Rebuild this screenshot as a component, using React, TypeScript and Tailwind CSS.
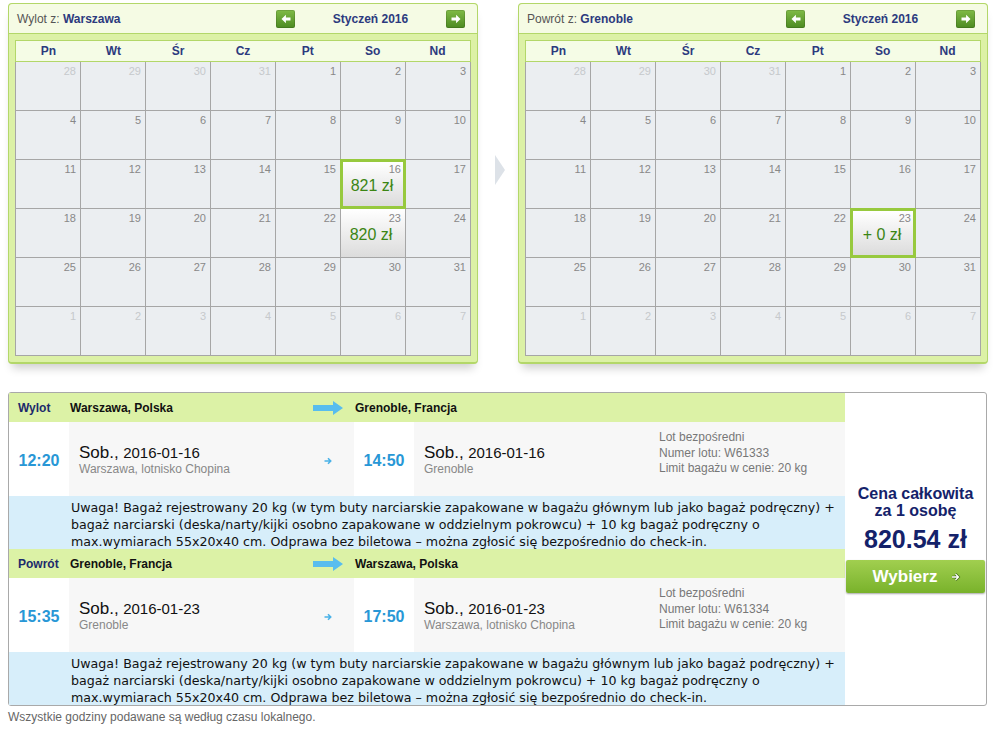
import React from 'react';

type Cell = { d: number; out?: boolean; price?: string; sel?: boolean };
type Prices = Record<number, { price: string; sel?: boolean }>;

const WEEK = ['Pn', 'Wt', 'Śr', 'Cz', 'Pt', 'So', 'Nd'];

// styczeń 2016 zaczyna się w piątek, siatka od 28 grudnia
function monthCells(prices: Prices): Cell[] {
    const cells: Cell[] = [];
    for (let i = 0; i < 42; i++) {
        if (i < 4) cells.push({ d: 28 + i, out: true });
        else if (i - 3 <= 31) cells.push({ d: i - 3, ...prices[i - 3] });
        else cells.push({ d: i - 34, out: true });
    }
    return cells;
}

function NavButton({ next }: { next?: boolean }) {
    return (
        <button className="flex h-[18px] w-[19px] items-center justify-center rounded-[2px] bg-gradient-to-b from-[#80bb46] to-[#4c8a20] shadow-[inset_0_0_0_1px_rgba(0,0,0,0.12)]">
            <svg width="10" height="10" viewBox="0 0 10 10" className={next ? '' : 'rotate-180'}>
                <path d="M0.5 3.6h4.6V0.8L9.5 5 5.1 9.2V6.4H0.5z" fill="#fff" />
            </svg>
        </button>
    );
}

function DayCell({ c }: { c: Cell }) {
    if (c.price) {
        return (
            <div
                className={
                    c.sel
                        ? 'relative z-10 -m-px flex h-[50px] flex-col border-[3px] border-[#97c93e] bg-gradient-to-b from-white to-[#dcdcdc] pt-px pr-[2px]'
                        : 'flex h-[48px] flex-col bg-gradient-to-b from-white to-[#dcdcdc] pt-[3px] pr-[4px]'
                }
            >
                <div className="text-right text-[11px] leading-[12px] text-[#888]">{c.d}</div>
                <div className="mt-[2px] text-center text-[16px] leading-[18px] text-[#3b8514]">{c.price}</div>
            </div>
        );
    }
    return (
        <div className="h-[48px] bg-[#ebeef1] pt-[3px] pr-[4px]">
            <div className={c.out ? 'text-right text-[11px] leading-[12px] text-[#c6c9cc]' : 'text-right text-[11px] leading-[12px] text-[#888]'}>
                {c.d}
            </div>
        </div>
    );
}

function Calendar({ label, city, prices }: { label: string; city: string; prices: Prices }) {
    const cells = monthCells(prices);
    return (
        <div className="w-[470px] rounded-[4px] border border-b-2 border-[#b3d769] bg-[#dcf1a6] shadow-[0_8px_9px_-4px_rgba(0,0,0,0.2)]">
            <div className="flex h-[30px] items-center justify-between rounded-t-[4px] border-b border-[#b3d769] bg-[#f5fbe4] pl-[8px] pr-[12px]">
                <div className="text-[12px] text-[#555]">
                    {label} <span className="font-bold text-[#2c3a7e]">{city}</span>
                </div>
                <div className="flex items-center">
                    <NavButton />
                    <div className="w-[151px] text-center text-[12px] font-bold text-[#2c3a7e]">Styczeń 2016</div>
                    <NavButton next />
                </div>
            </div>
            <div className="p-[6px]">
                <div className="flex h-[22px] border border-[#b3d769] bg-[#f5fce6]">
                    {WEEK.map((w) => (
                        <div key={w} className="flex-1 text-center text-[12px] font-bold leading-[20px] text-[#2c3a7e]">
                            {w}
                        </div>
                    ))}
                </div>
                <div className="grid grid-cols-7 gap-px border-x border-b border-[#a6a6a6] bg-[#a6a6a6]">
                    {cells.map((c, i) => (
                        <DayCell key={i} c={c} />
                    ))}
                </div>
            </div>
        </div>
    );
}

function BigArrow() {
    return (
        <svg width="30" height="14" viewBox="0 0 30 14">
            <path d="M0 4h20V0l10 7-10 7v-4H0z" fill="#58bdee" />
        </svg>
    );
}

function SmallArrow() {
    return (
        <svg width="8" height="8" viewBox="0 0 8 8">
            <path d="M0.5 4h6M4 1.3 6.7 4 4 6.7" stroke="#4ab2e8" strokeWidth="1.6" fill="none" />
        </svg>
    );
}

interface LegProps {
    kind: string;
    from: string;
    to: string;
    dep: string;
    arr: string;
    date: string;
    depPlace: string;
    arrPlace: string;
    flight: string;
}

function Leg({ kind, from, to, dep, arr, date, depPlace, arrPlace, flight }: LegProps) {
    return (
        <>
            <div className="flex h-[29px] items-center bg-[#dcf2a6] text-[12px] font-bold">
                <div className="w-[60px] pl-[9px] text-[#1d2a6b]">{kind}</div>
                <div className="flex w-[285px] items-center justify-between pl-px pr-[11px] text-[#111]">
                    {from}
                    <BigArrow />
                </div>
                <div className="pl-px text-[#111]">{to}</div>
            </div>
            <div className="flex h-[74px]">
                <div className="flex w-[60px] items-center justify-center bg-white pt-[3px] text-[16px] font-bold text-[#2897d6]">{dep}</div>
                <div className="flex w-[285px] items-center justify-between bg-[#f7f7f7] pl-[10px] pr-[22px] pt-[3px]">
                    <div>
                        <div className="leading-[18px] text-[#111]">
                            <span className="text-[17px]">Sob.,</span> <span className="text-[15px]">{date}</span>
                        </div>
                        <div className="text-[12px] leading-[15px] text-[#888]">{depPlace}</div>
                    </div>
                    <SmallArrow />
                </div>
                <div className="flex w-[60px] items-center justify-center bg-white pt-[3px] text-[16px] font-bold text-[#2897d6]">{arr}</div>
                <div className="flex flex-1 bg-[#f7f7f7] pl-[10px]">
                    <div className="w-[235px] self-center pt-[3px]">
                        <div className="leading-[18px] text-[#111]">
                            <span className="text-[17px]">Sob.,</span> <span className="text-[15px]">{date}</span>
                        </div>
                        <div className="text-[12px] leading-[15px] text-[#888]">{arrPlace}</div>
                    </div>
                    <div className="pt-[8px] text-[12px] leading-[15.5px] text-[#777]">
                        Lot bezpośredni
                        <br />
                        Numer lotu: {flight}
                        <br />
                        Limit bagażu w cenie: 20 kg
                    </div>
                </div>
            </div>
            <div className="h-[53px] whitespace-nowrap bg-[#d7eefa] pl-[62px] pt-[3px] font-['DejaVu_Sans',sans-serif] text-[12.65px] leading-[17px] text-[#111]">
                Uwaga! Bagaż rejestrowany 20 kg (w tym buty narciarskie zapakowane w bagażu głównym lub jako bagaż podręczny) +
                <br />
                bagaż narciarski (deska/narty/kijki osobno zapakowane w oddzielnym pokrowcu) + 10 kg bagaż podręczny o
                <br />
                max.wymiarach 55x20x40 cm. Odprawa bez biletowa – można zgłosić się bezpośrednio do check-in.
            </div>
        </>
    );
}

export default function App() {
    return (
        <div className="h-[734px] w-[995px] overflow-hidden bg-white pt-[3px] font-['Liberation_Sans',Arial,sans-serif]">
            <div className="flex items-start pl-[8px]">
                <Calendar label="Wylot z:" city="Warszawa" prices={{ 16: { price: '821 zł', sel: true }, 23: { price: '820 zł' } }} />
                <div className="w-[40px] pl-[17px] pt-[152px]">
                    <svg width="10" height="30" viewBox="0 0 10 30">
                        <path d="M0 0l10 15L0 30z" fill="#dde2e8" />
                    </svg>
                </div>
                <Calendar label="Powrót z:" city="Grenoble" prices={{ 23: { price: '+ 0 zł', sel: true } }} />
            </div>

            <div className="mx-[8px] mt-[28px] flex rounded-[3px] border border-[#a9a9a9]">
                <div className="w-[836px]">
                    <Leg
                        kind="Wylot"
                        from="Warszawa, Polska"
                        to="Grenoble, Francja"
                        dep="12:20"
                        arr="14:50"
                        date="2016-01-16"
                        depPlace="Warszawa, lotnisko Chopina"
                        arrPlace="Grenoble"
                        flight="W61333"
                    />
                    <Leg
                        kind="Powrót"
                        from="Grenoble, Francja"
                        to="Warszawa, Polska"
                        dep="15:35"
                        arr="17:50"
                        date="2016-01-23"
                        depPlace="Grenoble"
                        arrPlace="Warszawa, lotnisko Chopina"
                        flight="W61334"
                    />
                </div>
                <div className="flex flex-1 flex-col items-center pt-[92px]">
                    <div className="text-center text-[16px] font-bold leading-[17px] text-[#14226a]">
                        Cena całkowita
                        <br />
                        za 1 osobę
                    </div>
                    <div className="mt-[5px] text-[25px] font-bold leading-[30px] text-[#14226a]">820.54 zł</div>
                    <button className="mt-[6px] ml-[-1px] flex h-[33px] w-[139px] items-center justify-center gap-[14px] rounded-[2px] bg-gradient-to-b from-[#a1cf4f] to-[#79b22a] pl-[4px] shadow-[0_1px_2px_rgba(0,0,0,0.35)]">
                        <span className="text-[17px] font-bold text-white">Wybierz</span>
                        <svg width="10" height="10" viewBox="0 0 10 10">
                            <path d="M1 5h6M4.5 2 7.5 5 4.5 8" stroke="#3e6a12" strokeWidth="2.6" fill="none" />
                            <path d="M1 5h6M4.5 2 7.5 5 4.5 8" stroke="#fff" strokeWidth="1.3" fill="none" />
                        </svg>
                    </button>
                </div>
            </div>

            <div className="mt-[4px] pl-[8px] text-[12px] leading-[14px] text-[#666]">
                Wszystkie godziny podawane są według czasu lokalnego.
            </div>
        </div>
    );
}
